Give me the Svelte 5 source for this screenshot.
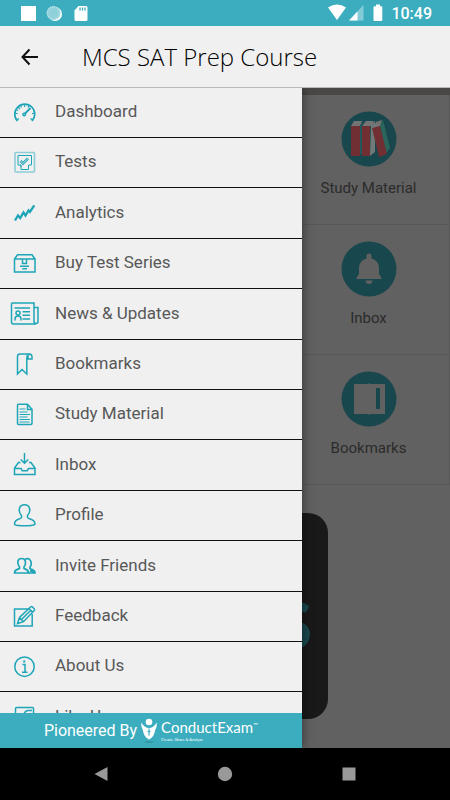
<script>
    let menuItems = [
        { label: "Dashboard", icon: "dashboard" },
        { label: "Tests", icon: "tests" },
        { label: "Analytics", icon: "analytics" },
        { label: "Buy Test Series", icon: "buy" },
        { label: "News & Updates", icon: "news" },
        { label: "Bookmarks", icon: "bookmark" },
        { label: "Study Material", icon: "study" },
        { label: "Inbox", icon: "inbox" },
        { label: "Profile", icon: "profile" },
        { label: "Invite Friends", icon: "friends" },
        { label: "Feedback", icon: "feedback" },
        { label: "About Us", icon: "about" },
        { label: "Like Us", icon: "like" }
    ];

    let tiles = [
        { label: "Study Material", icon: "books" },
        { label: "Inbox", icon: "bell" },
        { label: "Bookmarks", icon: "book" }
    ];
</script>

<div class="screen">
    <div class="status-bar">
        <svg class="status-left" viewBox="0 0 70 20" aria-hidden="true">
            <rect x="1" y="2" width="15" height="15" fill="#fff" />
            <circle cx="35" cy="10" r="7" fill="#fff" />
            <circle cx="33.500" cy="9" r="7" fill="#8fd0da" />
            <circle cx="33.500" cy="9" r="6" fill="none" stroke="#b9e1e7" stroke-width="1.500" stroke-dasharray="1 1" />
            <path d="M58.500 2H66a1.500 1.500 0 0 1 1.500 1.500v12A1.500 1.500 0 0 1 66 17H56a1.500 1.500 0 0 1-1.500-1.500V6.500z" fill="#fff" />
            <path d="M60 3.500v3M62.500 3.500v3M65 3.500v3" stroke="#3badbe" stroke-width="1.300" />
        </svg>
        <svg class="status-right" viewBox="0 0 60 20" aria-hidden="true">
            <path d="M1 4.500Q10 -1.500 19 4.500L10 17z" fill="#fff" />
            <path d="M36.500 2v15.500H22z" fill="#83cbd6" />
            <path d="M30.500 8.500v9H22z" fill="#fff" />
            <path d="M49 1.500h4v1.700h1.300a1 1 0 0 1 1 1V17a1 1 0 0 1-1 1h-6.800a1 1 0 0 1-1-1V4.200a1 1 0 0 1 1-1H49z" fill="#fff" />
        </svg>
        <span class="clock">10:49</span>
    </div>

    <header class="app-bar">
        <button class="back" aria-label="Back">
            <svg viewBox="0 0 20 20" aria-hidden="true">
                <path d="M9.500 2.500L2.500 10l7 7.500M2.500 10H18" fill="none" stroke="#111" stroke-width="2" />
            </svg>
        </button>
        <h1>MCS SAT Prep Course</h1>
    </header>

    <main>
        <div class="home">
            <div class="banner"></div>
            <div class="tiles">
                {#each tiles as tile}
                    <a class="tile" href="#home">
                        <svg viewBox="0 0 56 56" aria-hidden="true">
                            <circle cx="28" cy="28" r="27.500" fill="#19474e" />
                            {#if tile.icon == "books"}
                                <path d="M10 15l3-5h8l-2 5zM21 15l4-5h8l-2 5zM32 17l3-6 6-2-2 7z" fill="#747474" />
                                <path d="M19 15l3-5v32l-4 3z" fill="#23565a" />
                                <path d="M30 15l4-5v31l-5 4z" fill="#707878" />
                                <path d="M39 15l3-6 7 28-4 5z" fill="#2b665c" />
                                <path d="M10 15h9v30h-9zM21 15h8v30h-8zM31 17l8-2 7 28-8 3z" fill="#702f33" />
                            {:else if tile.icon == "bell"}
                                <path d="M28 12.500a2.500 2.500 0 0 1 2.500 2.500v2.500c5 1.500 7.500 5 7.500 10V33l2.500 4v1H15.500v-1l2.500-4v-5.500c0-5 2.500-8.500 7.500-10V15a2.500 2.500 0 0 1 2.500-2.500z" fill="#616161" />
                                <path d="M24.500 39.500h7a3.500 3.500 0 0 1-7 0z" fill="#616161" />
                            {:else}
                                <path d="M13 13h14l1-1 1 1h15v30H29l-1 1-1-1H13z" fill="#616161" />
                                <path d="M35 17h4v21h-4z" fill="#19474e" />
                            {/if}
                        </svg>
                        <span>{tile.label}</span>
                    </a>
                {/each}
            </div>
            <div class="brand">S</div>
        </div>

        <nav class="drawer">
            <ul>
                {#each menuItems as item}
                    <li>
                        <a href="#{item.icon}">
                            <svg viewBox="0 0 30 26" aria-hidden="true">
                                {#if item.icon == "dashboard"}
                                    <path d="M7.500 21A10 10 0 1 1 22 21" stroke-width="1.700" />
                                    <path d="M14.700 4v3M8 7l2 2M4.700 13.500h3M22 13.500h3M10.500 5l1 2.500M19 5l-1 2.500M6 9.500l2.200 1M7 20l2-1.500M22.500 20l-2-1.500" stroke-width="1.100" />
                                    <path d="M14.500 14l6-6" stroke-width="1.800" />
                                    <circle cx="14.200" cy="14.500" r="1.300" />
                                {:else if item.icon == "tests"}
                                    <rect x="5" y="2.500" width="19.500" height="19.500" rx="1" stroke="#8dcdd6" stroke-width="1.600" />
                                    <path d="M8 5.500h13.500V15h-3v4.500h-7.500V15H8zM11 15v2" stroke-width="1" />
                                    <path d="M10.500 11l2.500 2.500 5-5" stroke-width="2.600" />
                                    <path d="M10.500 11l2.500 2.500 5-5" stroke="#f0f0f0" stroke-width=".8" />
                                {:else if item.icon == "analytics"}
                                    <path d="M5 20.500l3-5 2.200 2.500 3.300-5.500 2 3 3-5 1.400 1.500L24.300 5.300" stroke-width="2.300" />
                                {:else if item.icon == "buy"}
                                    <path d="M4.500 8l3-4.200h14.500L25 8v13H4.500zM4.500 8H25M12.500 8v4.500h4V8" />
                                    <path d="M10 15.300h9M12.300 17.700h4.700" />
                                {:else if item.icon == "news"}
                                    <path d="M1.500 2H24v18.500a2 2 0 0 0 4 0V6.500h-4M1.500 2v19a2 2 0 0 0 2 2H26" />
                                    <path d="M4.500 7H20M12.500 10.700H20M12.500 14.300H20M12.500 18H20M5 19.500v-1.500a3 3 0 0 1 6 0v1.500" />
                                    <circle cx="8" cy="12" r="2" />
                                {:else if item.icon == "bookmark"}
                                    <path d="M7.500 22V4.500a2.500 2.500 0 0 1 2.500-2.500h9a2.700 2.700 0 0 1 3 2.700V7h-4V4.700A2.700 2.700 0 0 0 16.800 6v16L12 17.500z" />
                                    <path d="M17 5q0-3 3-2.500" />
                                {:else if item.icon == "study"}
                                    <path d="M8.500 2.300h9l4.500 5v14q0 1.200-1.200 1.200H8.500q-1 0-1-1.200V3.500q0-1.200 1-1.200zM17.500 2.500v5H22" />
                                    <path d="M9.500 7h6M9.500 10h8M9.500 12.500H20M9.500 15h8M9.500 17.500H20M9.500 20h10" stroke-width="1.100" />
                                {:else if item.icon == "inbox"}
                                    <path d="M14.500 1V11M10.700 7.500l3.800 3.700 3.800-3.700" />
                                    <path d="M10.500 10.500H8.500l-4 5.500v6.500H25V16l-4-5.500h-2M4.500 16.500h6.500l1.200 2.200h5l1.300-2.200H25" />
                                {:else if item.icon == "profile"}
                                    <path d="M11.500 12.500C7.500 8 9 1.800 14.500 1.800S21.500 8 17.500 12.500v2c1 2 7.500 1.500 7.500 6.500 0 .8-1.500 1.200-4 1.400q-6.500.6-13 0c-2.500-.2-3.500-.6-3.500-1.400 0-5 6-4.500 7-6.500z" />
                                {:else if item.icon == "friends"}
                                    <path d="M9.500 14C6.500 10 7.500 5.500 11.500 5.500s5.500 4.500 2.500 8.500v1.500c1.500 1 4.500.8 4.500 4.500H4.500c0-3.700 3.500-3.500 5-4.500z" stroke-width="1.700" />
                                    <path d="M15 6.200c5-2 8 3 5 8v1.500c1.300 1 5 .8 5 4.300h-6.500" stroke-width="1.700" />
                                    <path d="M20 17.500L24.500 19.500" stroke-width="2" />
                                {:else if item.icon == "feedback"}
                                    <path d="M19 5H4.500v17h17.700V10" />
                                    <path d="M7.500 19.500l2-6L20.500 3q1-.8 2 0l1.700 1.700q.8 1 0 1.800L13.500 17.700zM9.800 14l3.500 3.500M19 4.500l3.800 3.800M11.500 15.500l9.300-9.200" />
                                {:else if item.icon == "about"}
                                    <circle cx="14.500" cy="12.700" r="9.700" />
                                    <path d="M12.500 10.500h2.500v7.500M12 18.300h5.500" />
                                    <path d="M14.200 6.500v2" stroke-width="2" />
                                {:else}
                                    <rect x="5.500" y="3.500" width="18" height="18" rx="1" />
                                    <path d="M13 13q1.500-6.500 5-6.500h4" />
                                {/if}
                            </svg>
                            <span>{item.label}</span>
                        </a>
                    </li>
                {/each}
            </ul>
            <footer>
                <span class="pioneered">Pioneered By</span>
                <svg class="mark" viewBox="0 0 18 26" aria-hidden="true">
                    <circle cx="9" cy="4" r="3.300" fill="#fff" />
                    <path d="M1 4.500q4 5.500 8 5.500t8-5.500q0 4-2 8-.5 6-6 9-5.500-3-6-9-2-4-2-8z" fill="#fff" />
                    <path d="M9 10.500v7M7.500 13.500h3" stroke="#3badbe" stroke-width="1.200" />
                    <ellipse cx="9" cy="24" rx="4.500" ry=".8" fill="#2f8d9b" />
                </svg>
                <span class="company">
                    <span class="name">ConductExam<sup>™</sup></span>
                    <span class="tagline">Create, Share &amp; Analyze</span>
                </span>
            </footer>
        </nav>
    </main>

    <div class="nav-bar">
        <button aria-label="Back">
            <svg viewBox="0 0 16 16"><path d="M14.500 1v14L1.500 8z" /></svg>
        </button>
        <button aria-label="Home">
            <svg viewBox="0 0 16 16"><circle cx="8" cy="8" r="7.200" /></svg>
        </button>
        <button aria-label="Recent apps">
            <svg viewBox="0 0 16 16"><rect x="1.500" y="1.500" width="13" height="13" /></svg>
        </button>
    </div>
</div>

<style>
    :global(body) {
        margin: 0;
        background: #000;
    }
    .screen {
        display: flex;
        flex-direction: column;
        height: 100vh;
        font-family: Roboto, "Liberation Sans", sans-serif;
    }
    a {
        color: inherit;
        text-decoration: none;
    }
    button {
        padding: 0;
        border: 0;
        background: none;
    }
    .status-bar {
        display: flex;
        align-items: center;
        box-sizing: border-box;
        height: 26px;
        padding: 0 18px 0 20px;
        background: #3badbe;
        color: #fff;
    }
    .status-left {
        width: 70px;
        height: 20px;
        margin-top: 2px;
    }
    .status-right {
        width: 60px;
        height: 20px;
        margin: 0 4px 0 auto;
    }
    .clock {
        font-size: 16px;
        font-weight: 500;
    }
    .app-bar {
        display: flex;
        align-items: center;
        box-sizing: border-box;
        height: 62px;
        padding: 0 20px;
        background: #f0f0f0;
        border-bottom: 1px solid #b9b9b9;
        position: relative;
        z-index: 2;
    }
    .back svg {
        display: block;
        width: 20px;
        height: 20px;
    }
    h1 {
        margin: 0 0 0 42px;
        font-family: "Open Sans", "Noto Sans", sans-serif;
        font-size: 24px;
        font-weight: 300;
        color: #000;
        white-space: nowrap;
    }
    main {
        position: relative;
        flex: 1;
        min-height: 0;
        overflow: hidden;
        background: #616161;
    }
    .banner {
        height: 7px;
        background: #4a4846;
    }
    .tiles {
        width: 36%;
        margin-left: auto;
    }
    .tile {
        display: flex;
        flex-direction: column;
        align-items: center;
        box-sizing: border-box;
        height: 130px;
        padding-top: 16px;
        border-right: 1px solid #585858;
        border-bottom: 1px solid #585858;
        color: #2b2b2b;
        font-size: 15px;
    }
    .tile svg {
        width: 56px;
        height: 56px;
        margin-bottom: 12px;
    }
    .brand {
        display: flex;
        align-items: center;
        justify-content: flex-end;
        box-sizing: border-box;
        width: 206px;
        height: 206px;
        margin: 28px auto 0;
        padding: 16px 16px 0 0;
        border-radius: 20px;
        background: #191919;
        color: #19474e;
        font-family: Lato, sans-serif;
        font-size: 64px;
        font-weight: 900;
    }
    .drawer {
        position: absolute;
        top: 0;
        bottom: 0;
        left: 0;
        display: flex;
        flex-direction: column;
        width: 67%;
        background: #f0f0f0;
        box-shadow: 0 0 10px rgba(0, 0, 0, 0.5);
    }
    ul {
        display: grid;
        grid-auto-rows: 50px 50px 51px 50px 51px;
        flex: 1;
        min-height: 0;
        margin: 0;
        padding: 0;
        overflow: hidden;
        list-style: none;
    }
    li a {
        display: flex;
        align-items: center;
        gap: 15px;
        box-sizing: border-box;
        height: 100%;
        padding-left: 10px;
        border-bottom: 1px solid #111;
        color: #585858;
        font-size: 17px;
    }
    li svg {
        width: 30px;
        height: 26px;
        fill: none;
        stroke: #1ea5b7;
        stroke-width: 1.5;
    }
    li span {
        padding-bottom: 3px;
    }
    footer {
        display: flex;
        align-items: center;
        justify-content: center;
        gap: 3px;
        box-sizing: border-box;
        height: 35px;
        background: #3badbe;
        color: #fff;
    }
    .pioneered {
        font-size: 16px;
    }
    .mark {
        width: 18px;
        height: 26px;
    }
    .company {
        display: flex;
        flex-direction: column;
        font-family: Lato, sans-serif;
    }
    .name {
        font-size: 15px;
        font-weight: 400;
        line-height: 19px;
    }
    sup {
        font-size: 6px;
        line-height: 6px;
        vertical-align: 6px;
    }
    .tagline {
        font-size: 4px;
        line-height: 6px;
    }
    .nav-bar {
        display: flex;
        align-items: center;
        justify-content: center;
        gap: 108px;
        height: 52px;
        background: #000;
    }
    .nav-bar svg {
        display: block;
        width: 16px;
        height: 16px;
        fill: #999;
    }
</style>
